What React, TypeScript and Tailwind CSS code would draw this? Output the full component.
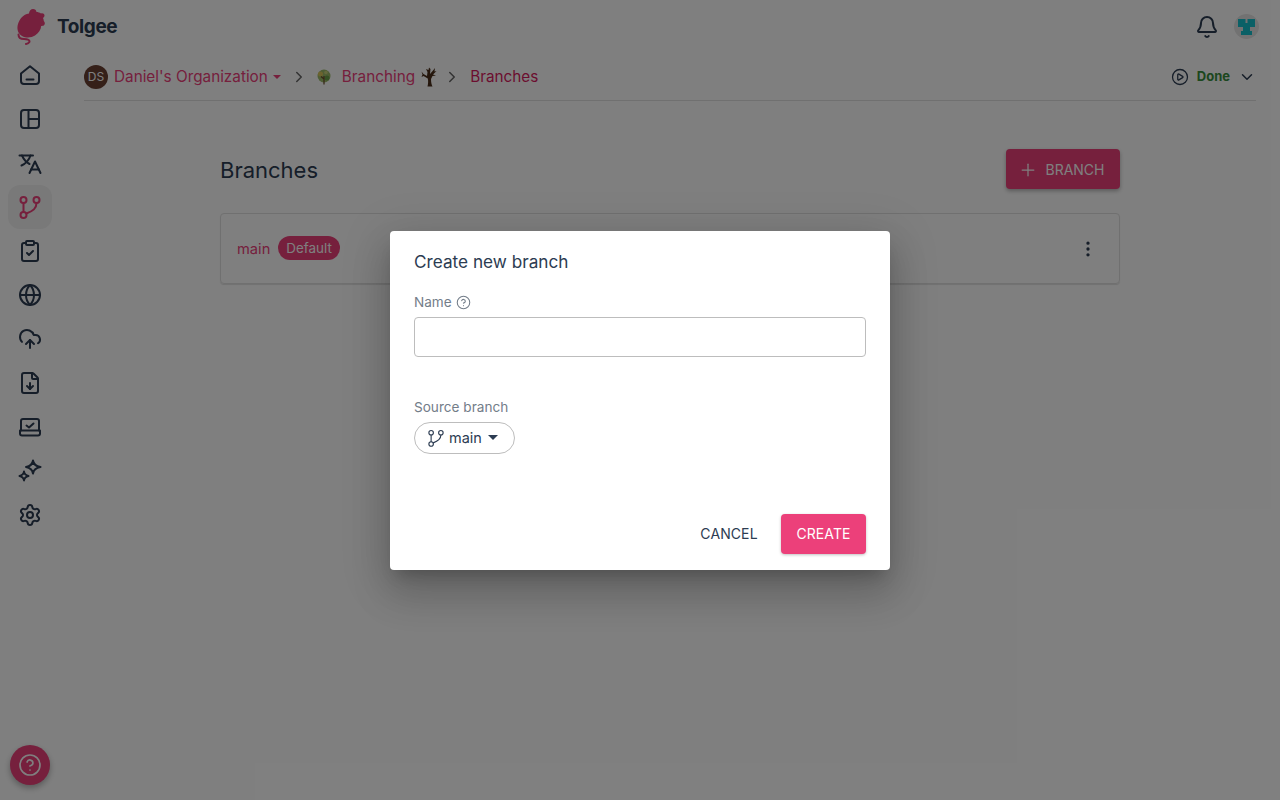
import React from "react";
import {
  Bell,
  ChevronDown,
  ChevronRight,
  CircleHelp,
  CirclePlay,
  ClipboardCheck,
  CloudUpload,
  EllipsisVertical,
  FileDown,
  Globe,
  Plus,
  Settings,
} from "lucide-react";

const iconProps = {
  width: 24,
  height: 24,
  viewBox: "0 0 24 24",
  fill: "none",
  stroke: "currentColor",
  strokeWidth: 2,
  strokeLinecap: "round" as const,
  strokeLinejoin: "round" as const,
};

const HomeIcon = () => (
  <svg {...iconProps}>
    <path d="M3 10.6 12 3.2l9 7.4V18a3 3 0 0 1-3 3H6a3 3 0 0 1-3-3Z" />
    <path d="M8.5 16.5h7" />
  </svg>
);

const LayoutIcon = () => (
  <svg {...iconProps}>
    <rect x="3" y="3" width="18" height="18" rx="3" />
    <path d="M10.5 3v18M10.5 12H21" />
  </svg>
);

const TranslateIcon = () => (
  <svg {...iconProps}>
    <path d="M1.500 4.500H15" />
    <path d="M4 4.500c2 4.500 4.500 7 7.500 8.500" />
    <path d="M12.500 4.500C11 9 8 12.500 3.500 14.500" />
    <path d="M11.500 22l5.500-11.500L22.500 22" />
    <path d="M13 18.500h8" />
  </svg>
);

const BranchIcon = ({ size = 24, width = 2 }: { size?: number; width?: number }) => (
  <svg {...iconProps} width={size} height={size} strokeWidth={width}>
    <circle cx="5.500" cy="5" r="3" />
    <circle cx="18.500" cy="5" r="3" />
    <circle cx="5.500" cy="20" r="3" />
    <path d="M5.500 8v9M18.500 8c0 5.500-3.500 8-10.200 10.500" />
  </svg>
);

const LaptopCheckIcon = () => (
  <svg {...iconProps}>
    <path d="M3 15.500V6a2 2 0 0 1 2-2h14a2 2 0 0 1 2 2v9.500" />
    <path d="M2 15.500h20v3a2 2 0 0 1-2 2H4a2 2 0 0 1-2-2Z" />
    <path d="m8.500 10.500 2.500 2 4.500-4" />
  </svg>
);

const SparkIcon = () => (
  <svg {...iconProps}>
    <path d="M15 1.500C15.500 5 17.500 7.200 22.500 8 17.500 8.800 15.500 11 15 14.500 14.500 11 12.500 8.800 8 8 12.500 7.200 14.500 5 15 1.500Z" />
    <path d="M6 12.500C6.300 15 7.500 16.300 10.500 17 7.500 17.700 6.300 19 6 21.500 5.700 19 4.500 17.700 1.500 17 4.500 16.300 5.700 15 6 12.500Z" />
  </svg>
);

const sideItems = [
  { icon: <HomeIcon /> },
  { icon: <LayoutIcon /> },
  { icon: <TranslateIcon /> },
  { icon: <BranchIcon />, active: true },
  { icon: <ClipboardCheck size={24} strokeWidth={2} /> },
  { icon: <Globe size={24} strokeWidth={2} /> },
  { icon: <CloudUpload size={24} strokeWidth={2} /> },
  { icon: <FileDown size={24} strokeWidth={2} /> },
  { icon: <LaptopCheckIcon /> },
  { icon: <SparkIcon /> },
  { icon: <Settings size={24} strokeWidth={2} /> },
];

// mouse logo, drawn by hand
const Logo = () => (
  <svg width="30" height="37" viewBox="0 0 30 37" className="text-[#ec407a]" fill="currentColor">
    <path d="M13 5.500C13 3 15 1 17 1c2 0 3.300 1.300 3.500 3 1.500 0 3.200.5 4.500 1.500 1-.8 3.500-.3 3.500 2 0 1.300-.8 2-1.500 2.500.5 1 .8 2 .8 3 1.200 1 1.500 3.300.2 4.300-.8.700-2 .7-2.800.7C25 22 22.500 25 19 27.500c-3.500 2.300-9 2.800-13 .5C2 25.500.5 21 2 16c1.500-5 5-9.500 11-10.500Z" />
    <path d="M2.500 26.500c0 3 2.500 4.500 5.500 4.500 3.500 0 5.500.8 5.500 2.500 0 1.500-2 2-3.500 2.500" fill="none" stroke="currentColor" strokeWidth="2" strokeLinecap="round" />
  </svg>
);

const TreeSprout = () => (
  <svg width="16" height="16" viewBox="0 0 16 16">
    <circle cx="8" cy="7" r="6.500" fill="#9dbb6a" />
    <circle cx="4.500" cy="5" r="2.500" fill="#d8c65c" />
    <circle cx="11" cy="9" r="2.500" fill="#6da24a" />
    <circle cx="10" cy="3.500" r="1.800" fill="#c9d27a" />
    <path d="M8 15.500V7M8 10 5 7.500" stroke="#6b4a2a" strokeWidth="1.200" fill="none" />
  </svg>
);

const BareTree = () => (
  <svg width="16" height="20" viewBox="0 0 16 20">
    <path d="M6.500 19.500c.8-3 .8-6 .3-8L2.500 9 .5 10l1-2.500L.5 4.500l2 2.500 3.500 2 .5-4L5 2l2.500 1L8 .5 9.500 2 9 7l3-3.500L14 1l-.5 3.500 2-.5-3.500 3.500 3 1-3.500.5-1.500 3c0 3 .5 5.500 1.500 7.500Z" fill="#4b2f1a" />
  </svg>
);

const PixelAvatar = () => (
  <div className="flex h-[25px] w-[25px] items-center justify-center rounded-full bg-[#e5e5e5]">
    <svg width="17" height="16" viewBox="0 0 17 16" fill="#14c0cc">
      <path d="M0 0h7.500v4h2V0H17v8h-5v4h2v4H3v-4h2V8H0Z" />
    </svg>
  </div>
);

export default function App() {
  return (
    <div
      className="relative flex h-[800px] w-[1280px] flex-col overflow-hidden bg-white text-[#2c3c52]"
      style={{ fontFamily: "Inter, 'Noto Sans', sans-serif" }}
    >
      <header className="flex h-[53px] shrink-0 items-center justify-between pl-4 pr-[21px]">
        <div className="flex items-center gap-[11px]">
          <Logo />
          <span className="pt-[2px] text-[19px] font-bold tracking-[-0.4px] text-[#2c3c52]">Tolgee</span>
        </div>
        <div className="flex items-center gap-[15px]">
          <Bell size={24} strokeWidth={2} />
          <PixelAvatar />
        </div>
      </header>

      <div className="flex min-h-0 flex-1">
        <nav className="flex w-[60px] shrink-0 flex-col items-center pl-0">
          {sideItems.map((item, i) => (
            <div
              key={i}
              className={`flex h-11 w-11 items-center justify-center rounded-xl ${
                item.active ? "bg-[#f2f2f2] text-[#ec407a]" : "text-[#2c3c52]"
              }`}
            >
              {item.icon}
            </div>
          ))}
        </nav>

        <main className="flex min-w-0 flex-1 flex-col pl-6 pr-6">
          <div className="flex h-[48px] shrink-0 items-center justify-between border-b border-[#e0e0e0]">
            <div className="flex items-center text-[15.3px] leading-[24px] text-[#ec407a]">
              <div className="mr-[6px] flex h-6 w-6 items-center justify-center rounded-full bg-[#6a4032] text-xs text-white">
                DS
              </div>
              <span className="pt-[1px]">Daniel's Organization</span>
              <span className="ml-[5px] h-0 w-0 border-x-[4px] border-t-[4px] border-x-transparent border-t-[#ec407a]" />
              <ChevronRight size={18} className="ml-[9px] text-[#666]" />
              <span className="ml-[8px]"><TreeSprout /></span>
              <span className="ml-[10px] pt-[1px]">Branching</span>
              <span className="ml-[6px]"><BareTree /></span>
              <ChevronRight size={18} className="ml-[6px] text-[#666]" />
              <span className="ml-[9px] pt-[1px] text-[#d81b60]">Branches</span>
            </div>
            <div className="flex items-center pr-0">
              <CirclePlay size={18} strokeWidth={1.700} className="mr-[8px]" />
              <span className="text-[13px] font-bold text-[#388e3c]">Done</span>
              <ChevronDown size={18} className="ml-[8px]" />
            </div>
          </div>

          <div className="mx-auto w-[900px] pt-[48px]">
            <div className="flex h-10 items-center justify-between">
              <h1 className="pt-[3px] text-[22px] font-normal text-[#2c3c52]">Branches</h1>
              <button className="flex h-10 w-[114px] items-center justify-center gap-[7px] rounded bg-[#ec407a] pr-[3px] pt-[1px] text-sm font-normal text-white shadow-[0_2px_4px_rgba(0,0,0,0.3)]">
                <Plus size={20} strokeWidth={1.500} />
                BRANCH
              </button>
            </div>
            <div className="mt-6 flex h-[71px] items-center justify-between rounded border border-[#e0e0e0] pl-4 pr-[21px] shadow-[0_1px_1px_rgba(0,0,0,0.12)]">
              <div className="flex items-center gap-2">
                <span className="pt-[2px] text-[14.7px] text-[#ec407a]">main</span>
                <span className="rounded-full bg-[#ec407a] px-2 py-[3px] text-[13.4px] leading-[18px] text-white">Default</span>
              </div>
              <EllipsisVertical size={20} />
            </div>
          </div>
        </main>
      </div>

      <button className="absolute bottom-[15px] left-[10px] flex h-10 w-10 items-center justify-center rounded-full bg-[#ec407a] text-white shadow-[0_3px_6px_rgba(0,0,0,0.3)]">
        <CircleHelp size={24} strokeWidth={1.700} />
      </button>

      <div className="absolute inset-0 flex items-center justify-center bg-black/50">
        <div className="flex h-[339px] w-[500px] flex-col rounded bg-white px-6 pb-4 pt-[19px] shadow-[0_11px_15px_-7px_rgba(0,0,0,0.2),0_24px_38px_3px_rgba(0,0,0,0.14),0_9px_46px_8px_rgba(0,0,0,0.12)]">
          <h2 className="text-[17.2px] font-normal leading-[24px] text-[#2c3c52]">Create new branch</h2>
          <div className="mt-[20px] flex items-center gap-[4px] text-[13.6px] leading-[17px] text-[#737d89]">
            Name
            <CircleHelp size={15} strokeWidth={1.700} />
          </div>
          <div className="mt-[6px] h-[40px] rounded border border-[#bdbdbd]" />
          <div className="mt-[42px] text-[13.6px] leading-[17px] text-[#737d89]">Source branch</div>
          <div className="mt-[6px] flex h-8 w-[101px] items-center rounded-full border border-[#bdbdbd] pl-[12px] text-[#2c3c52]">
            <BranchIcon size={18} width={1.500} />
            <span className="ml-[4px] pt-[1px] text-[14.5px]">main</span>
            <span className="ml-[6px] h-0 w-0 border-x-[5px] border-t-[5px] border-x-transparent border-t-[#2c3c52]" />
          </div>
          <div className="mt-auto flex items-center justify-end gap-2">
            <button className="flex h-10 w-[80px] items-center justify-center pr-[8px] text-sm font-normal tracking-[0.1px] text-[#2c3c52]">
              CANCEL
            </button>
            <button className="flex h-10 w-[85px] items-center justify-center rounded bg-[#ec407a] text-sm font-normal tracking-[0.1px] text-white shadow-[0_1px_3px_rgba(0,0,0,0.25)]">
              CREATE
            </button>
          </div>
        </div>
      </div>
    </div>
  );
}
